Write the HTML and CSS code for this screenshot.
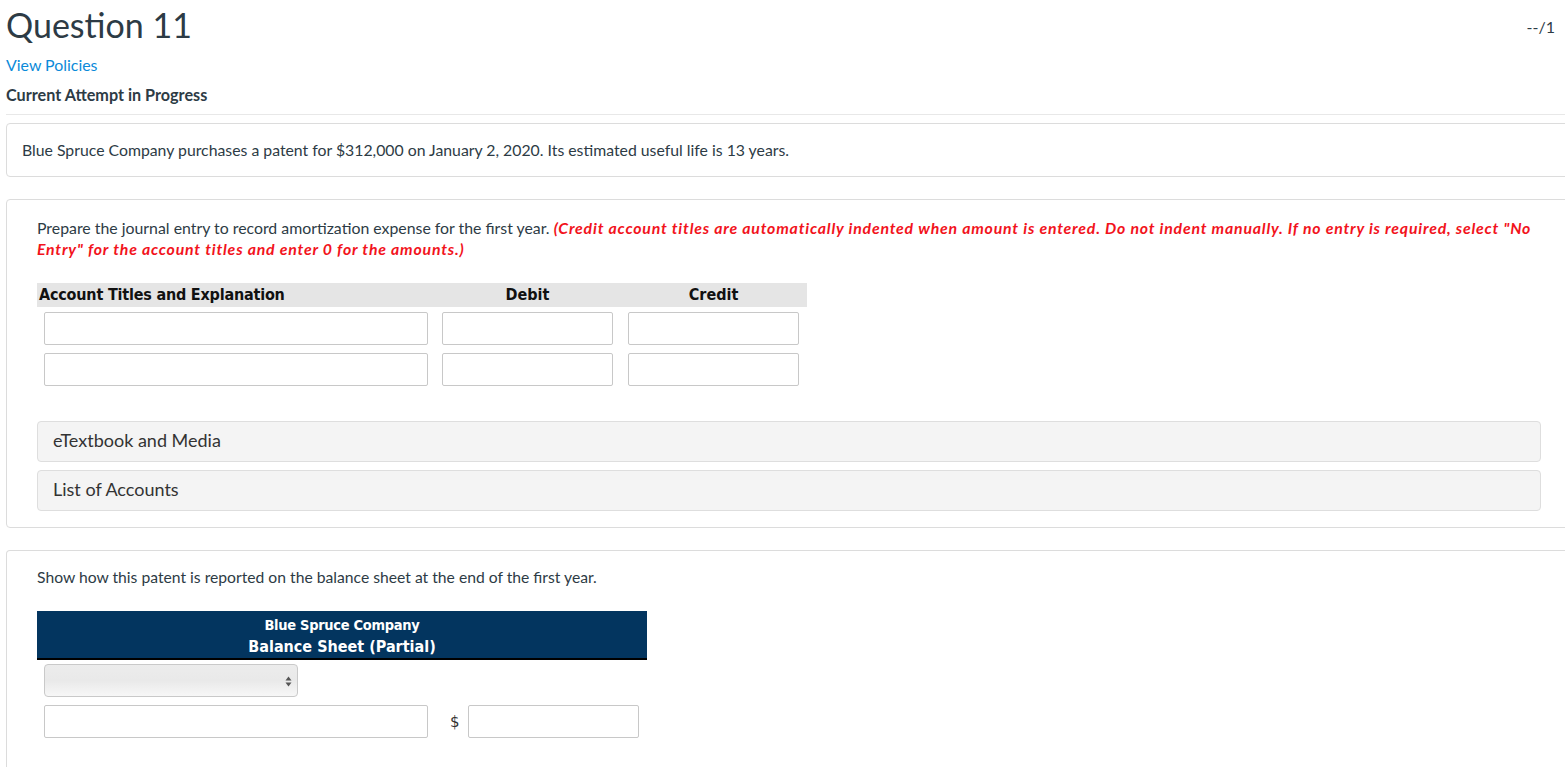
FILE: index.html
```html
<!DOCTYPE html>
<html lang="en">
<head>
<meta charset="utf-8">
<title>Question 11</title>
<link rel="stylesheet" href="styles.css">
</head>
<body>
<div class="page">
  <div class="q-header">
    <h1 class="q-title">Question 11</h1>
    <div class="q-score">--/1</div>
  </div>
  <a class="policies" href="#">View Policies</a>
  <div class="attempt">Current Attempt in Progress</div>
  <hr class="divider">

  <div class="card card-intro">
    <p class="intro-text">Blue Spruce Company purchases a patent for $312,000 on January 2, 2020. Its estimated useful life is 13 years.</p>
  </div>

  <div class="card card-part">
    <p class="part-text">Prepare the journal entry to record amortization expense for the first year. <em class="warn">(Credit account titles are automatically indented when amount is entered. Do not indent manually. If no entry is required, select "No Entry" for the account titles and enter 0 for the amounts.)</em></p>

    <div class="journal">
      <div class="j-head">
        <div class="jh jh-acc">Account Titles and Explanation</div>
        <div class="jh jh-num">Debit</div>
        <div class="jh jh-num">Credit</div>
      </div>
      <div class="j-row">
        <div class="jc"><input class="field" type="text"></div>
        <div class="jc"><input class="field" type="text"></div>
        <div class="jc"><input class="field" type="text"></div>
      </div>
      <div class="j-row">
        <div class="jc"><input class="field" type="text"></div>
        <div class="jc"><input class="field" type="text"></div>
        <div class="jc"><input class="field" type="text"></div>
      </div>
    </div>

    <div class="accordion">
      <div class="acc-item">eTextbook and Media</div>
      <div class="acc-item">List of Accounts</div>
    </div>
  </div>

  <div class="card card-part card-last">
    <p class="part-text">Show how this patent is reported on the balance sheet at the end of the first year.</p>
    <div class="bsheet">
      <div class="bs-head">
        <div class="bs-company">Blue Spruce Company</div>
        <div class="bs-title">Balance Sheet (Partial)</div>
      </div>
      <div class="bs-body">
        <div class="fake-select">
          <svg class="sel-arrows" width="7" height="11" viewBox="0 0 7 11"><path d="M3.5 0.5 L6.5 4.5 L0.5 4.5 Z" fill="#555"/><path d="M3.5 10.5 L6.5 6.5 L0.5 6.5 Z" fill="#555"/></svg>
        </div>
        <div class="bs-row">
          <input class="field field-wide" type="text">
          <span class="dollar">$</span>
          <input class="field field-amt" type="text">
        </div>
      </div>
    </div>
  </div>
</div>
</body>
</html>
```

FILE: styles.css
```css
html {
  overflow: hidden;
}
body {
  margin: 0;
  padding: 2px 0 0 6px;
  font-family: Lato, "Open Sans", sans-serif;
  color: #2d3b45;
  background: #fff;
}
.page {
  width: 1566px;
}
.q-header {
  display: flex;
  justify-content: space-between;
  align-items: flex-start;
}
.q-title {
  margin: 0;
  font-size: 34px;
  line-height: 45px;
  font-weight: 400;
  color: #2d3b45;
}
.q-score {
  margin-top: 15px;
  margin-right: 17px;
  font-size: 16px;
  line-height: 20px;
}
.policies {
  display: block;
  margin-top: 8px;
  font-size: 15.9px;
  line-height: 20px;
  color: #0b8ad9;
  text-decoration: none;
  width: max-content;
}
.attempt {
  margin-top: 10px;
  font-size: 16.2px;
  line-height: 20px;
  font-weight: 700;
  color: #2d3b45;
}
.divider {
  margin: 9px 0 0 0;
  border: 0;
  border-top: 1px solid #e8e8e8;
  height: 0;
}
.card {
  border: 1px solid #dcdcdc;
  border-radius: 4px;
  background: #fff;
}
.card-intro {
  margin-top: 8px;
  padding: 16px 15px 16px;
}
.intro-text {
  margin: 0;
  font-size: 15.8px;
  line-height: 20px;
}
.card-part {
  margin-top: 22px;
  padding: 17px 30px 16px;
}
.part-text {
  margin: 0;
  font-size: 15.85px;
  line-height: 21px;
  color: #2d3b45;
}
.warn {
  font-weight: 700;
  font-style: italic;
  color: #f2131c;
  letter-spacing: 0.8px;
}
.journal {
  margin-top: 24px;
  width: 770px;
}
.j-head {
  display: grid;
  grid-template-columns: 398px 185px 187px;
  background: #e5e5e5;
  height: 24px;
}
.jh {
  font-family: "DejaVu Sans Condensed", "DejaVu Sans", sans-serif;
  font-stretch: condensed;
  font-weight: 700;
  font-size: 16px;
  line-height: 24px;
  color: #111;
}
.jh-acc {
  padding-left: 2px;
  letter-spacing: -0.2px;
}
.jh-num {
  text-align: center;
}
.j-row {
  display: grid;
  grid-template-columns: 398px 185px 187px;
  margin-top: 5px;
}
.j-row + .j-row {
  margin-top: 8px;
}
.jc {
  padding: 0 7px;
}
.jc:last-child {
  padding: 0 8px 0 8px;
}
.field {
  display: block;
  box-sizing: border-box;
  width: 100%;
  height: 33px;
  margin: 0;
  border: 1px solid #c8c8c8;
  border-radius: 2px;
  background: #fff;
  font-family: Lato, sans-serif;
  font-size: 14px;
}
.accordion {
  margin-top: 35px;
  display: flex;
  flex-direction: column;
  gap: 8px;
}
.acc-item {
  box-sizing: border-box;
  height: 41px;
  padding: 0 15px 2px;
  border: 1px solid #dedede;
  border-radius: 4px;
  background: #f4f4f4;
  font-size: 18px;
  line-height: 37px;
  color: #333;
}
.card-last {
  padding-top: 16px;
  height: 400px;
  border-bottom: 0;
}
.card-last .part-text {
  line-height: 20px;
  font-size: 15.7px;
}
.bsheet {
  margin-top: 24px;
  width: 610px;
}
.bs-head {
  background: #03355f;
  border-bottom: 2px solid #000;
  padding-top: 3px;
  text-align: center;
  color: #fff;
  font-family: "DejaVu Sans Condensed", "DejaVu Sans", sans-serif;
  font-stretch: condensed;
  font-weight: 700;
  line-height: 22px;
}
.bs-company {
  font-size: 14.5px;
  letter-spacing: -0.3px;
}
.bs-title {
  font-size: 16px;
}
.bs-body {
  padding: 4px 7px 0;
}
.fake-select {
  position: relative;
  box-sizing: border-box;
  width: 254px;
  height: 33px;
  border: 1px solid #c9c9c9;
  border-radius: 4px;
  background: linear-gradient(#ececec, #e9e9e9 50%, #f7f7f7);
}
.sel-arrows {
  position: absolute;
  right: 5px;
  top: 11px;
}
.bs-row {
  display: flex;
  align-items: center;
  margin-top: 8px;
}
.field-wide {
  width: 384px;
}
.dollar {
  margin-left: 22px;
  width: 18px;
  font-size: 15px;
  color: #333;
  font-family: "DejaVu Sans", sans-serif;
}
.field-amt {
  width: 171px;
}
```
